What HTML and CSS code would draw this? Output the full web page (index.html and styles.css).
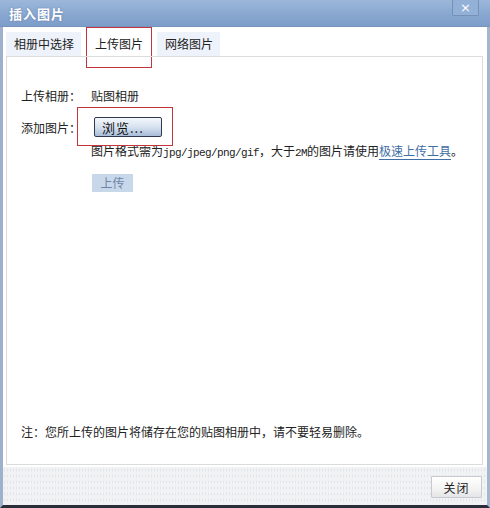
FILE: index.html
```html
<!DOCTYPE html>
<html lang="zh-CN">
<head>
    <meta charset="UTF-8">
    <title>插入图片</title>
    <link rel="stylesheet" href="styles.css">
</head>
<body>
    <div class="dialog">
        <div class="title-bar">
            <span class="title">插入图片</span>
            <span class="close-x">×</span>
        </div>
        <div class="content">
            <div class="tabs">
                <div class="tab">相册中选择</div>
                <div class="tab active">上传图片<span class="mark mark-tab"></span></div>
                <div class="tab">网络图片</div>
            </div>
            <div class="panel">
                <div class="row">
                    <span class="label">上传相册：</span>
                    <span class="value">贴图相册</span>
                </div>
                <div class="row row-file">
                    <span class="label">添加图片：</span>
                    <div class="value">
                        <button class="browse-btn">浏览...</button>
                        <span class="mark mark-browse"></span>
                    </div>
                </div>
                <div class="hint">图片格式需为<span class="mono">jpg/jpeg/png/gif</span>，大于<span class="mono">2M</span>的图片请使用<a class="link">极速上传工具</a>。</div>
                <div class="upload-wrap">
                    <button class="upload-btn">上传</button>
                </div>
                <div class="note">注：您所上传的图片将储存在您的贴图相册中，请不要轻易删除。</div>
            </div>
        </div>
        <div class="footer">
            <button class="close-btn">关闭</button>
        </div>
    </div>
</body>
</html>
```

FILE: styles.css
```css
body {
    margin: 0;
    background: #fff;
    font-family: "Noto Sans CJK SC", "DejaVu Sans", sans-serif;
    font-size: 12px;
    color: #222;
}
.dialog {
    width: 490px;
    height: 508px;
    box-sizing: border-box;
    display: flex;
    flex-direction: column;
    border-left: 3px solid #9db1cd;
    border-right: 3px solid #a3b5cf;
    border-bottom: 3px solid #2a2d3a;
    background: #fff;
}
.title-bar {
    height: 26px;
    flex: none;
    position: relative;
    margin-left: -3px;
    margin-right: -3px;
    padding-left: 9px;
    display: flex;
    align-items: center;
    background: linear-gradient(#9cb7da, #87a6cf 60%, #7d9dca);
    border-bottom: 1px solid #7894be;
}
.title {
    color: #fff;
    font-weight: bold;
    font-size: 13px;
    letter-spacing: 1px;
    text-shadow: 0 0 2px #5f7ca6;
}
.close-x {
    position: absolute;
    right: 11px;
    top: 0;
    width: 25px;
    height: 15px;
    border: 1px solid #7590b9;
    border-top: none;
    border-radius: 0 0 2px 2px;
    background: #93b0d6;
    color: #fff;
    font-family: "DejaVu Sans", sans-serif;
    font-size: 13px;
    line-height: 15px;
    text-align: center;
}
.content {
    flex: 1;
    display: flex;
    flex-direction: column;
    padding: 5px 4px 0 3px;
}
.tabs {
    display: flex;
    gap: 6px;
    height: 24px;
}
.tab {
    position: relative;
    padding: 0 7px 0 8px;
    background: #eef2fa;
    line-height: 24px;
    font-size: 12px;
    color: #222;
}
.tab.active {
    background: #fff;
    padding: 0 8px;
}
.mark {
    position: absolute;
    border: 1px solid #c3343c;
    pointer-events: none;
}
.mark-tab {
    left: -1px;
    top: -5px;
    width: 64px;
    height: 39px;
}
.panel {
    flex: 1;
    position: relative;
    border: 1px solid #dcdcdc;
    padding: 27px 14px 0 14px;
    display: flex;
    flex-direction: column;
}
.row {
    display: flex;
    align-items: center;
    height: 22px;
}
.row-file {
    margin-top: 10px;
}
.label {
    width: 70px;
    flex: none;
}
.value {
    position: relative;
}
.browse-btn {
    margin-left: 3px;
    width: 68px;
    height: 20px;
    padding: 0 0 0 7px;
    border: 1px solid #2f3a4e;
    border-radius: 2px;
    background: linear-gradient(#f4f7fb, #d7e2ef 50%, #a8bdd8);
    font-family: inherit;
    font-size: 13px;
    color: #111;
    line-height: 17px;
    text-align: left;
    letter-spacing: 1px;
}
.mark-browse {
    left: -14px;
    top: -10px;
    width: 94px;
    height: 37px;
}
.hint {
    margin-top: 5px;
    padding-left: 70px;
    line-height: 16px;
    white-space: nowrap;
}
.mono {
    font-family: "Liberation Mono", monospace;
    font-size: 11px;
    letter-spacing: -0.6px;
}
.link {
    color: #3f6ea6;
    text-decoration: none;
    border-bottom: 1px solid #3f6ea6;
}
.upload-wrap {
    padding-left: 71px;
    margin-top: 13px;
}
.upload-btn {
    width: 41px;
    height: 18px;
    padding: 0;
    border: none;
    background: #c8d7ea;
    color: #6d85a7;
    font-family: inherit;
    font-size: 12px;
    line-height: 18px;
}
.note {
    margin-top: auto;
    margin-bottom: 24px;
    line-height: 16px;
}
.footer {
    height: 38px;
    flex: none;
    margin-top: 2px;
    display: flex;
    justify-content: flex-end;
    align-items: center;
    padding: 2px 5px 0 0;
    box-sizing: border-box;
    background-color: #f1f2f4;
    background-image: radial-gradient(#e2e4e8 0.6px, transparent 0.8px);
    background-size: 3px 6px;
}
.close-btn {
    width: 51px;
    height: 22px;
    padding: 0;
    border: 1px solid #c6c9ce;
    border-radius: 1px;
    background: linear-gradient(#ffffff, #f3f3f3 60%, #e4e5e8);
    font-family: inherit;
    font-size: 12px;
    color: #222;
    letter-spacing: 1px;
}
```
